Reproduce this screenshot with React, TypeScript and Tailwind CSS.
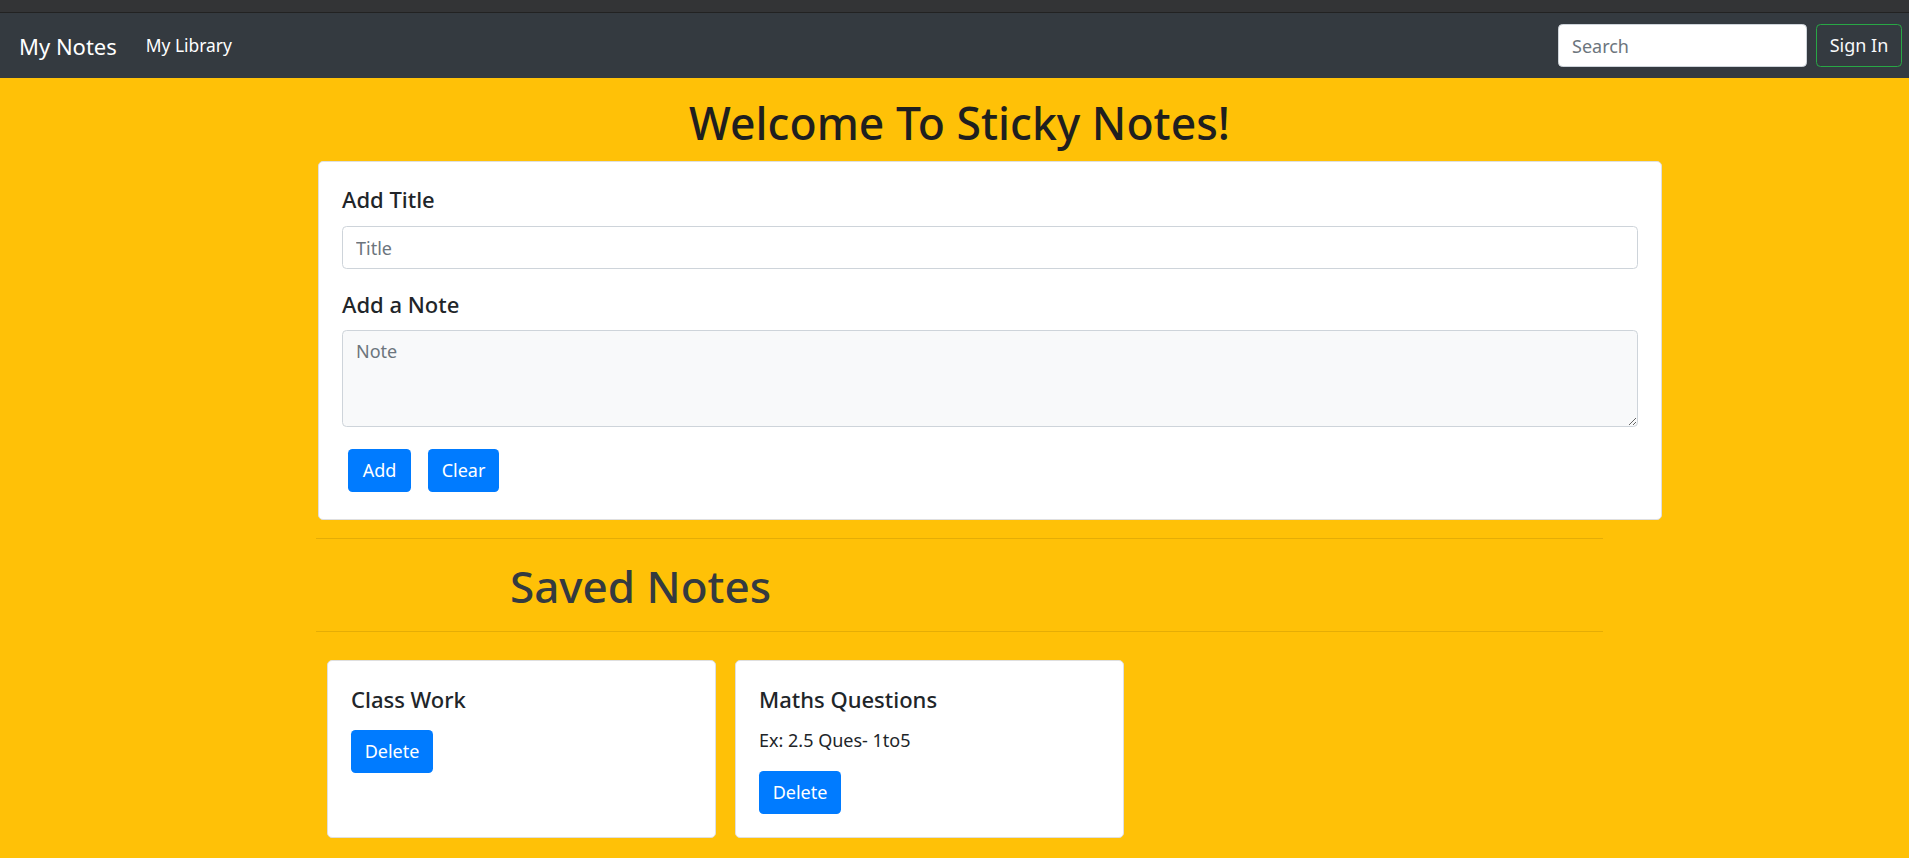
import React from "react";

const notes = [
  { id: 1, title: "Class Work", text: "" },
  { id: 2, title: "Maths Questions", text: "Ex: 2.5 Ques- 1to5" },
];

const font = { fontFamily: '"Noto Sans", "Open Sans", sans-serif' };

export default function App() {
  return (
    <div className="min-h-screen bg-[#ffc107] text-[#212529]" style={font}>
      {/* browser strip */}
      <div className="h-[13px] bg-[#333436] border-b border-[#222]" />

      {/* NAVBAR */}
      <nav className="h-[65px] bg-[#343a40] flex items-center pl-[19px] pr-[7px]">
        <span className="text-[22px] text-white leading-none">My Notes</span>
        <span className="ml-[29px] text-[17.4px] text-white leading-none">My Library</span>
        <div className="ml-auto flex items-center gap-[9px]">
          <input
            placeholder="Search"
            className="w-[249px] h-[43px] rounded-[4.5px] bg-white border border-[#ced4da] px-[13px] text-[18px] placeholder:text-[#6c757d] outline-none"
          />
          <button className="w-[86px] h-[43px] rounded-[4.5px] border border-[#28a745] text-[18px] text-[#f8f9fa]">
            Sign In
          </button>
        </div>
      </nav>

      {/* HEADING */}
      <h1 className="mt-[18px] pl-[10px] text-center text-[44.5px] font-medium leading-[1.2] text-[#1f1f1f]">
        Welcome To Sticky Notes!
      </h1>

      {/* FORM CARD */}
      <div className="ml-[318px] w-[1344px] mt-[12px] bg-white border border-[#dfdfdf] rounded-[5px] px-[23px] pt-[24px] pb-[27px]">
        <h5 className="text-[22px] font-medium leading-[27px] mb-[13px]">Add Title</h5>
        <input
          placeholder="Title"
          className="w-full h-[43px] rounded-[4.5px] border border-[#ced4da] px-[13px] text-[18px] placeholder:text-[#6c757d] outline-none"
        />
        <h5 className="mt-[22px] text-[22px] font-medium leading-[27px] mb-[12px]">Add a Note</h5>
        <textarea
          placeholder="Note"
          className="block w-full h-[97px] rounded-[4.5px] border border-[#ced4da] bg-[#f8f9fa] px-[13px] py-[7px] text-[18px] placeholder:text-[#6c757d] outline-none resize-y"
        />
        <div className="mt-[22px] ml-[6px] flex gap-[17px]">
          <button className="w-[63px] h-[43px] rounded-[4.5px] bg-[#007bff] text-white text-[18px]">Add</button>
          <button className="w-[71px] h-[43px] rounded-[4.5px] bg-[#007bff] text-white text-[18px]">Clear</button>
        </div>
      </div>

      {/* SAVED NOTES */}
      <hr className="mt-[18px] ml-[316px] w-[1287px] border-0 border-t border-black/10" />
      <h1 className="ml-[510px] pt-[21px] pb-[18px] text-[44px] font-medium leading-[1.2] text-[#343a40]">
        Saved Notes
      </h1>
      <hr className="ml-[316px] w-[1287px] border-0 border-t border-black/10" />

      <div className="ml-[327px] mt-[28px] flex gap-[19px] pb-[20px]">
        {notes.map((note) => (
          <div
            key={note.id}
            className="w-[389px] bg-white border border-[#dfdfdf] rounded-[5px] px-[23px] pt-[25px] pb-[23px]"
          >
            <h5 className="text-[22px] font-medium leading-[27px] mb-[14px]">{note.title}</h5>
            {note.text ? (
              <p className="text-[18px] leading-[27px] mb-[17px]">{note.text}</p>
            ) : (
              <div className="h-[3px]" />
            )}
            <button className="w-[82px] h-[43px] rounded-[4.5px] bg-[#007bff] text-white text-[18px]">
              Delete
            </button>
          </div>
        ))}
      </div>
    </div>
  );
}
